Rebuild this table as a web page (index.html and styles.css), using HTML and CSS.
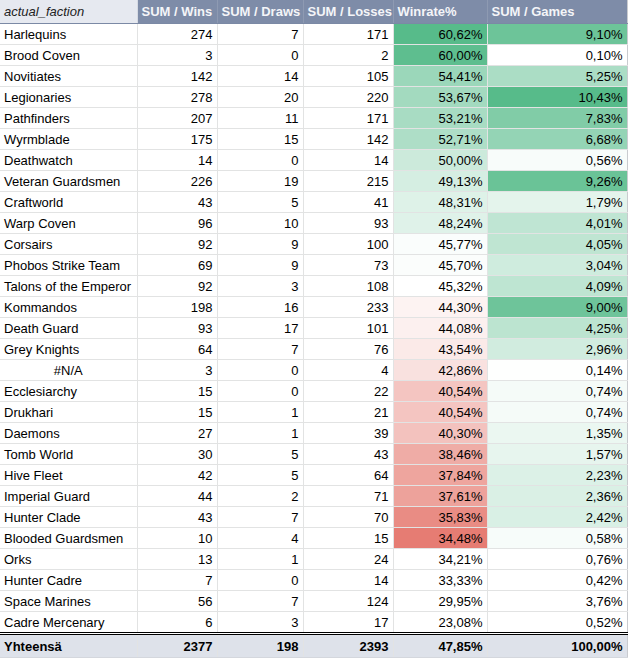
FILE: index.html
```html
<!DOCTYPE html>
<html lang="fi">
<head>
<meta charset="utf-8">
<title>Pivot table</title>
<link rel="stylesheet" href="styles.css">
</head>
<body>
<table class="pivot">
  <colgroup>
    <col class="c-name"><col class="c-wins"><col class="c-draws"><col class="c-losses"><col class="c-rate"><col class="c-games">
  </colgroup>
  <thead>
    <tr>
      <th class="h-name">actual_faction</th>
      <th>SUM / Wins</th>
      <th>SUM / Draws</th>
      <th>SUM / Losses</th>
      <th>Winrate%</th>
      <th>SUM / Games</th>
    </tr>
  </thead>
  <tbody>
    <tr><td class="name">Harlequins</td><td>274</td><td>7</td><td>171</td><td style="background:#57bb8a">60,62%</td><td style="background:#6dc499">9,10%</td></tr>
    <tr><td class="name">Brood Coven</td><td>3</td><td>0</td><td>2</td><td style="background:#5ebe8f">60,00%</td><td style="background:#ffffff">0,10%</td></tr>
    <tr><td class="name">Novitiates</td><td>142</td><td>14</td><td>105</td><td style="background:#9bd7ba">54,41%</td><td style="background:#abddc5">5,25%</td></tr>
    <tr><td class="name">Legionaries</td><td>278</td><td>20</td><td>220</td><td style="background:#a3dabf">53,67%</td><td style="background:#57bb8a">10,43%</td></tr>
    <tr><td class="name">Pathfinders</td><td>207</td><td>11</td><td>171</td><td style="background:#a8dcc3">53,21%</td><td style="background:#81cca7">7,83%</td></tr>
    <tr><td class="name">Wyrmblade</td><td>175</td><td>15</td><td>142</td><td style="background:#aedec7">52,71%</td><td style="background:#94d4b5">6,68%</td></tr>
    <tr><td class="name">Deathwatch</td><td>14</td><td>0</td><td>14</td><td style="background:#cceadb">50,00%</td><td style="background:#f8fcfa">0,56%</td></tr>
    <tr><td class="name">Veteran Guardsmen</td><td>226</td><td>19</td><td>215</td><td style="background:#d5eee2">49,13%</td><td style="background:#6ac397">9,26%</td></tr>
    <tr><td class="name">Craftworld</td><td>43</td><td>5</td><td>41</td><td style="background:#def2e8">48,31%</td><td style="background:#e4f4ec">1,79%</td></tr>
    <tr><td class="name">Warp Coven</td><td>96</td><td>10</td><td>93</td><td style="background:#dff2e9">48,24%</td><td style="background:#bfe5d3">4,01%</td></tr>
    <tr><td class="name">Corsairs</td><td>92</td><td>9</td><td>100</td><td style="background:#fafdfc">45,77%</td><td style="background:#bfe5d2">4,05%</td></tr>
    <tr><td class="name">Phobos Strike Team</td><td>69</td><td>9</td><td>73</td><td style="background:#fbfdfc">45,70%</td><td style="background:#cfecde">3,04%</td></tr>
    <tr><td class="name">Talons of the Emperor</td><td>92</td><td>3</td><td>108</td><td style="background:#ffffff">45,32%</td><td style="background:#bee5d2">4,09%</td></tr>
    <tr><td class="name">Kommandos</td><td>198</td><td>16</td><td>233</td><td style="background:#fdf3f2">44,30%</td><td style="background:#6ec49a">9,00%</td></tr>
    <tr><td class="name">Death Guard</td><td>93</td><td>17</td><td>101</td><td style="background:#fcf0ef">44,08%</td><td style="background:#bce4d0">4,25%</td></tr>
    <tr><td class="name">Grey Knights</td><td>64</td><td>7</td><td>76</td><td style="background:#fbeae8">43,54%</td><td style="background:#d1ecdf">2,96%</td></tr>
    <tr><td class="name err">#N/A</td><td>3</td><td>0</td><td>4</td><td style="background:#f9e1df">42,86%</td><td style="background:#fefffe">0,14%</td></tr>
    <tr><td class="name">Ecclesiarchy</td><td>15</td><td>0</td><td>22</td><td style="background:#f4c5c1">40,54%</td><td style="background:#f5fbf8">0,74%</td></tr>
    <tr><td class="name">Drukhari</td><td>15</td><td>1</td><td>21</td><td style="background:#f4c5c1">40,54%</td><td style="background:#f5fbf8">0,74%</td></tr>
    <tr><td class="name">Daemons</td><td>27</td><td>1</td><td>39</td><td style="background:#f3c2be">40,30%</td><td style="background:#ebf7f1">1,35%</td></tr>
    <tr><td class="name">Tomb World</td><td>30</td><td>5</td><td>43</td><td style="background:#efaca6">38,46%</td><td style="background:#e7f5ee">1,57%</td></tr>
    <tr><td class="name">Hive Fleet</td><td>42</td><td>5</td><td>64</td><td style="background:#eea59e">37,84%</td><td style="background:#dcf1e7">2,23%</td></tr>
    <tr><td class="name">Imperial Guard</td><td>44</td><td>2</td><td>71</td><td style="background:#eda29b">37,61%</td><td style="background:#daf0e5">2,36%</td></tr>
    <tr><td class="name">Hunter Clade</td><td>43</td><td>7</td><td>70</td><td style="background:#e98c84">35,83%</td><td style="background:#d9f0e5">2,42%</td></tr>
    <tr><td class="name">Blooded Guardsmen</td><td>10</td><td>4</td><td>15</td><td style="background:#e67c73">34,48%</td><td style="background:#f7fcfa">0,58%</td></tr>
    <tr><td class="name">Orks</td><td>13</td><td>1</td><td>24</td><td>34,21%</td><td>0,76%</td></tr>
    <tr><td class="name">Hunter Cadre</td><td>7</td><td>0</td><td>14</td><td>33,33%</td><td>0,42%</td></tr>
    <tr><td class="name">Space Marines</td><td>56</td><td>7</td><td>124</td><td>29,95%</td><td>3,76%</td></tr>
    <tr><td class="name">Cadre Mercenary</td><td>6</td><td>3</td><td>17</td><td>23,08%</td><td>0,52%</td></tr>
  </tbody>
  <tfoot>
    <tr><td class="name">Yhteensä</td><td>2377</td><td>198</td><td>2393</td><td>47,85%</td><td>100,00%</td></tr>
  </tfoot>
</table>
</body>
</html>
```
FILE: styles.css
```css
html, body {
  margin: 0;
  padding: 0;
  background: #ffffff;
}

.pivot {
  border-collapse: collapse;
  table-layout: fixed;
  width: 627px;
  font-family: "Liberation Sans", Arial, sans-serif;
  font-size: 13px;
  color: #000000;
}

.c-name { width: 137px; }
.c-wins { width: 80px; }
.c-draws { width: 86px; }
.c-losses { width: 90px; }
.c-rate { width: 94px; }
.c-games { width: 140px; }

.pivot th {
  height: 23px;
  padding: 0 4px;
  line-height: 23px;
  background: #7e8ca8;
  color: #f4f5f8;
  font-weight: bold;
  text-align: left;
  white-space: nowrap;
  overflow: hidden;
  border-left: 1px solid #8e9ab2;
  border-right: 1px solid #8e9ab2;
  border-bottom: 1px solid #7b89a5;
  border-top: none;
}

.pivot th.h-name {
  background: #e6e9f0;
  color: #222222;
  font-style: italic;
  font-weight: normal;
  border-left: none;
  border-right: 1px solid #d6dae3;
}

.pivot td {
  height: 18px;
  padding: 2px 4px 0 4px;
  line-height: 18px;
  text-align: right;
  white-space: nowrap;
  overflow: hidden;
  border: 1px solid #e2e3e3;
}

.pivot td:last-child,
.pivot th:last-child {
  border-right: 1px solid #c9cbcf;
}

.pivot td.name {
  text-align: left;
  border-left: none;
}

.pivot td.err {
  text-align: center;
}

.pivot tfoot td {
  height: 20px;
  padding: 2px 4px 0 4px;
  line-height: 20px;
  background: #dee2ea;
  font-weight: bold;
  border-top: 3px double #000000;
  border-bottom: 1px solid #d4d7dd;
}
```
